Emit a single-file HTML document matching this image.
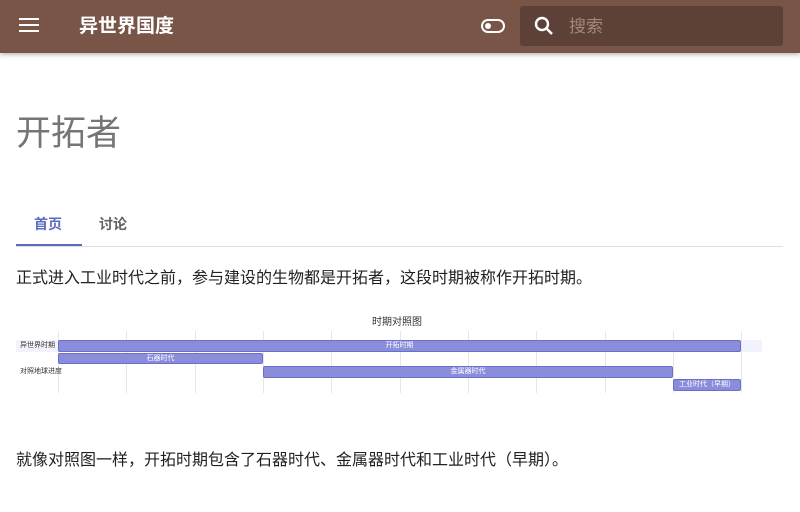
<!DOCTYPE html>
<html><head><meta charset="utf-8"><style>
*{margin:0;padding:0;box-sizing:border-box}
body{width:800px;height:512px;overflow:hidden;background:#fff;font-family:"Liberation Sans","Noto Sans CJK SC",sans-serif;position:relative}
.hdr{position:absolute;left:0;top:0;width:800px;height:53px;background:#795548;box-shadow:0 2px 4px rgba(0,0,0,.25)}
.a{position:absolute}
.bar{position:absolute;background:#8a8cdc;border:1px solid #6c6ec8;border-radius:2px;color:#fff;font-size:7px;text-align:center;line-height:10px}
.grid{position:absolute;top:331px;height:62px;width:1px;background:#e6e6e6}
</style></head><body>
<div class="hdr">
<div class="a" style="left:19px;top:18px;width:20px;height:2px;background:#fff"></div>
<div class="a" style="left:19px;top:24px;width:20px;height:2px;background:#fff"></div>
<div class="a" style="left:19px;top:30px;width:20px;height:2px;background:#fff"></div>
<div class="a" style="left:79px;top:13px;color:#fff;font-size:19px;font-weight:bold;line-height:28px">异世界国度</div>
<div class="a" style="left:481px;top:19px;width:24px;height:14px;border:2px solid #fff;border-radius:7px"><div style="position:absolute;left:2px;top:2px;width:6px;height:6px;background:#fff;border-radius:50%"></div></div>
<div class="a" style="left:520px;top:6px;width:263px;height:40px;background:#5d4037;border-radius:3px"></div>
<svg class="a" style="left:532px;top:14px" width="24" height="24" viewBox="0 0 24 24"><circle cx="10" cy="10" r="6" stroke="#fff" stroke-width="2.4" fill="none"/><path d="M14.5 14.5L20 20" stroke="#fff" stroke-width="2.6"/></svg>
<div class="a" style="left:569px;top:15px;color:#a1887f;font-size:17px;line-height:24px">搜索</div>
</div>
<div class="a" style="left:16px;top:111px;font-size:35px;color:#757575;line-height:46px">开拓者</div>
<div class="a" style="left:34px;top:214px;font-size:14px;color:#5c6bc0;font-weight:bold;line-height:20px">首页</div>
<div class="a" style="left:99px;top:214px;font-size:14px;color:#616161;font-weight:bold;line-height:20px">讨论</div>
<div class="a" style="left:16px;top:244px;width:66px;height:2px;background:#5c6bc0"></div>
<div class="a" style="left:16px;top:246px;width:767px;height:1px;background:#e0e0e0"></div>
<div class="a" style="left:16px;top:267px;font-size:16px;color:#212121;line-height:24px">正式进入工业时代之前，参与建设的生物都是开拓者，这段时期被称作开拓时期。</div>
<div class="a" style="left:372px;top:316px;font-size:10px;color:#333;line-height:14px">时期对照图</div>
<div class="a" style="left:16px;top:340px;width:746px;height:12px;background:#f2f2fc"></div>
<div class="grid" style="left:58px"></div><div class="grid" style="left:126px"></div><div class="grid" style="left:195px"></div><div class="grid" style="left:263px"></div><div class="grid" style="left:331px"></div><div class="grid" style="left:400px"></div><div class="grid" style="left:468px"></div><div class="grid" style="left:536px"></div><div class="grid" style="left:605px"></div><div class="grid" style="left:673px"></div><div class="grid" style="left:741px"></div>
<div class="a" style="left:20px;top:340px;font-size:7px;color:#333;line-height:12px">异世界时期</div>
<div class="a" style="left:20px;top:366px;font-size:7px;color:#333;line-height:12px">对照地球进度</div>
<div class="bar" style="left:58px;top:340px;width:683px;height:12px">开拓时期</div>
<div class="bar" style="left:58px;top:353px;width:205px;height:11px">石器时代</div>
<div class="bar" style="left:263px;top:366px;width:410px;height:12px">金属器时代</div>
<div class="bar" style="left:673px;top:379px;width:68px;height:12px">工业时代（早期）</div>
<div class="a" style="left:16px;top:449px;font-size:16px;color:#212121;line-height:24px">就像对照图一样，开拓时期包含了石器时代、金属器时代和工业时代（早期）。</div>
</body></html>
